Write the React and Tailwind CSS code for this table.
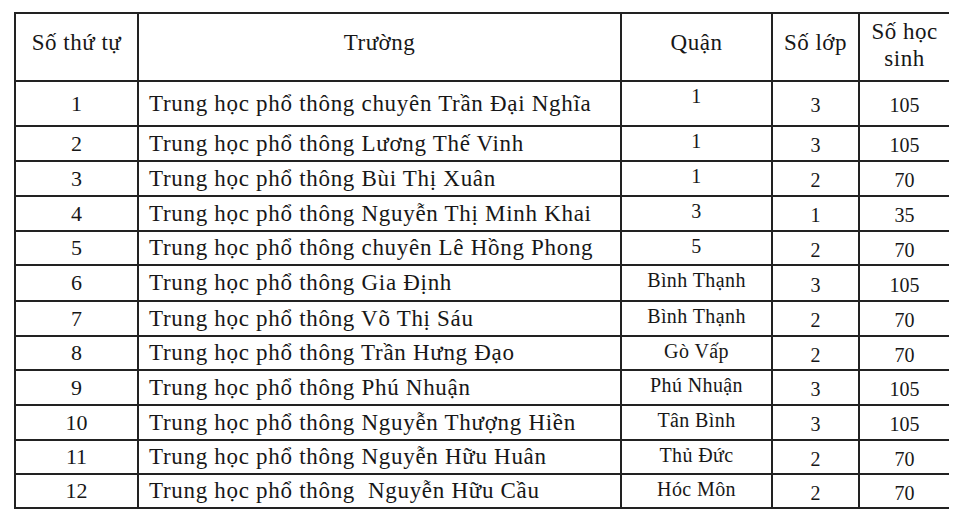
import React from "react";

const rows = [
  ["1", "Trung học phổ thông chuyên Trần Đại Nghĩa", "1", "3", "105", 45],
  ["2", "Trung học phổ thông Lương Thế Vinh", "1", "3", "105", 35],
  ["3", "Trung học phổ thông Bùi Thị Xuân", "1", "2", "70", 35],
  ["4", "Trung học phổ thông Nguyễn Thị Minh Khai", "3", "1", "35", 35],
  ["5", "Trung học phổ thông chuyên Lê Hồng Phong", "5", "2", "70", 34],
  ["6", "Trung học phổ thông Gia Định", "Bình Thạnh", "3", "105", 36],
  ["7", "Trung học phổ thông Võ Thị Sáu", "Bình Thạnh", "2", "70", 35],
  ["8", "Trung học phổ thông Trần Hưng Đạo", "Gò Vấp", "2", "70", 34],
  ["9", "Trung học phổ thông Phú Nhuận", "Phú Nhuận", "3", "105", 35],
  ["10", "Trung học phổ thông Nguyễn Thượng Hiền", "Tân Bình", "3", "105", 35],
  ["11", "Trung học phổ thông Nguyễn Hữu Huân", "Thủ Đức", "2", "70", 34],
  ["12", "Trung học phổ thông  Nguyễn Hữu Cầu", "Hóc Môn", "2", "70", 34],
];

const App = () => {
  return (
    <div className="w-[960px] h-[514px] bg-white overflow-hidden pt-[12px] pl-[14px] font-[Liberation_Serif,Times_New_Roman,serif] text-[#171717]">
      <table className="table-fixed border-collapse w-[934px] font-[Liberation_Serif,Times_New_Roman,serif]">
        <colgroup>
          <col className="w-[123px]" />
          <col className="w-[483px]" />
          <col className="w-[151px]" />
          <col className="w-[87px]" />
          <col className="w-[90px]" />
        </colgroup>
        <thead>
          <tr className="h-[68px] text-[23px] leading-[26px] tracking-[0.5px]">
            <th className="border-2 border-[#222] font-normal text-center pb-[8px] p-0">Số thứ tự</th>
            <th className="border-2 border-[#222] font-normal text-center pb-[8px] p-0">Trường</th>
            <th className="border-2 border-[#222] font-normal text-center pb-[8px] p-0">Quận</th>
            <th className="border-2 border-[#222] font-normal text-center pb-[8px] p-0">Số lớp</th>
            <th className="border-y-2 border-l-2 border-[#222] font-normal text-center leading-[27px] pb-[4px] p-0">
              Số học
              <br />
              sinh
            </th>
          </tr>
        </thead>
        <tbody>
          {rows.map(([stt, name, quan, lop, hs, h]) => (
            <tr key={stt} style={{ height: h }} className="leading-[24px]">
              <td className="border-2 border-[#222] text-center text-[22px] p-0">{stt}</td>
              <td className="border-2 border-[#222] text-[23px] tracking-[0.7px] pl-[10px] p-0 whitespace-pre">{name}</td>
              <td className="border-2 border-[#222] text-center align-top text-[20px] tracking-[0.4px] pt-[2px] p-0">{quan}</td>
              <td className="border-2 border-[#222] text-center text-[20px] pt-[3px] p-0">{lop}</td>
              <td className="border-y-2 border-l-2 border-[#222] text-center text-[20px] pt-[3px] p-0">{hs}</td>
            </tr>
          ))}
        </tbody>
      </table>
    </div>
  );
};

export default App;
